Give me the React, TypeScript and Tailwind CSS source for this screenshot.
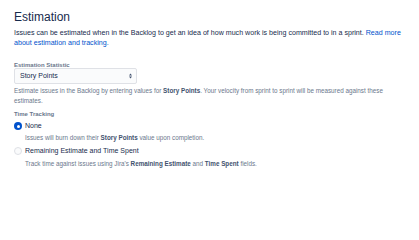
import React from "react";

function Radio({ checked }: { checked: boolean }) {
  return checked ? (
    <span className="flex h-[8px] w-[8px] shrink-0 items-center justify-center rounded-full bg-[#0052CC]">
      <span className="h-[3px] w-[3px] rounded-full bg-white" />
    </span>
  ) : (
    <span className="h-[8px] w-[8px] shrink-0 rounded-full border border-[#DFE1E6] bg-[#FAFBFC]" />
  );
}

export default function App() {
  return (
    <div className="min-h-[219px] bg-white px-[14px] pt-[10px] text-[#172B4D] [font-family:'Liberation_Sans',Arial,sans-serif]">
      <h1 className="text-[12px] font-medium leading-[14px]">Estimation</h1>
      <p className="mt-[4px] text-[7.1px] leading-[10px]">
        Issues can be estimated when in the Backlog to get an idea of how much work is being committed to in a sprint.{" "}
        <a className="text-[#0052CC]">Read more about estimation and tracking.</a>
      </p>

      <div className="mt-[13px]">
        <label className="block text-[6px] font-semibold leading-[8px] text-[#6B778C]">Estimation Statistic</label>
        <div className="-mt-[1px] flex h-[16px] w-[123px] items-center justify-between rounded-[2px] border border-[#DFE1E6] bg-[#FAFBFC] pl-[5px] pr-[4px]">
          <span className="text-[7px] font-medium">Story Points</span>
          <svg width="3" height="6" viewBox="0 0 3 6" className="text-[#42526E]">
            <path d="M0 2.5L1.5 0.5L3 2.5Z M0 3.5L1.5 5.5L3 3.5Z" fill="currentColor" />
          </svg>
        </div>
        <p className="mt-[2px] text-[6.3px] leading-[10px] text-[#6B778C]">
          Estimate issues in the Backlog by entering values for <b className="text-[#42526E]">Story Points</b>. Your velocity from sprint to sprint will be measured against these estimates.
        </p>
      </div>

      <div className="mt-[4px]">
        <label className="block text-[6px] font-semibold leading-[8px] text-[#6B778C]">Time Tracking</label>
        <div className="mt-[3px] flex items-center gap-[3px]">
          <Radio checked />
          <span className="text-[7px] leading-[10px]">None</span>
        </div>
        <p className="ml-[11px] mt-[2px] text-[6.3px] leading-[10px] text-[#6B778C]">
          Issues will burn down their <b className="text-[#42526E]">Story Points</b> value upon completion.
        </p>
        <div className="mt-[3px] flex items-center gap-[3px]">
          <Radio checked={false} />
          <span className="text-[7px] leading-[10px]">Remaining Estimate and Time Spent</span>
        </div>
        <p className="ml-[11px] mt-[3px] text-[6.3px] leading-[10px] text-[#6B778C]">
          Track time against issues using Jira's <b className="text-[#42526E]">Remaining Estimate</b> and <b className="text-[#42526E]">Time Spent</b> fields.
        </p>
      </div>
    </div>
  );
}
